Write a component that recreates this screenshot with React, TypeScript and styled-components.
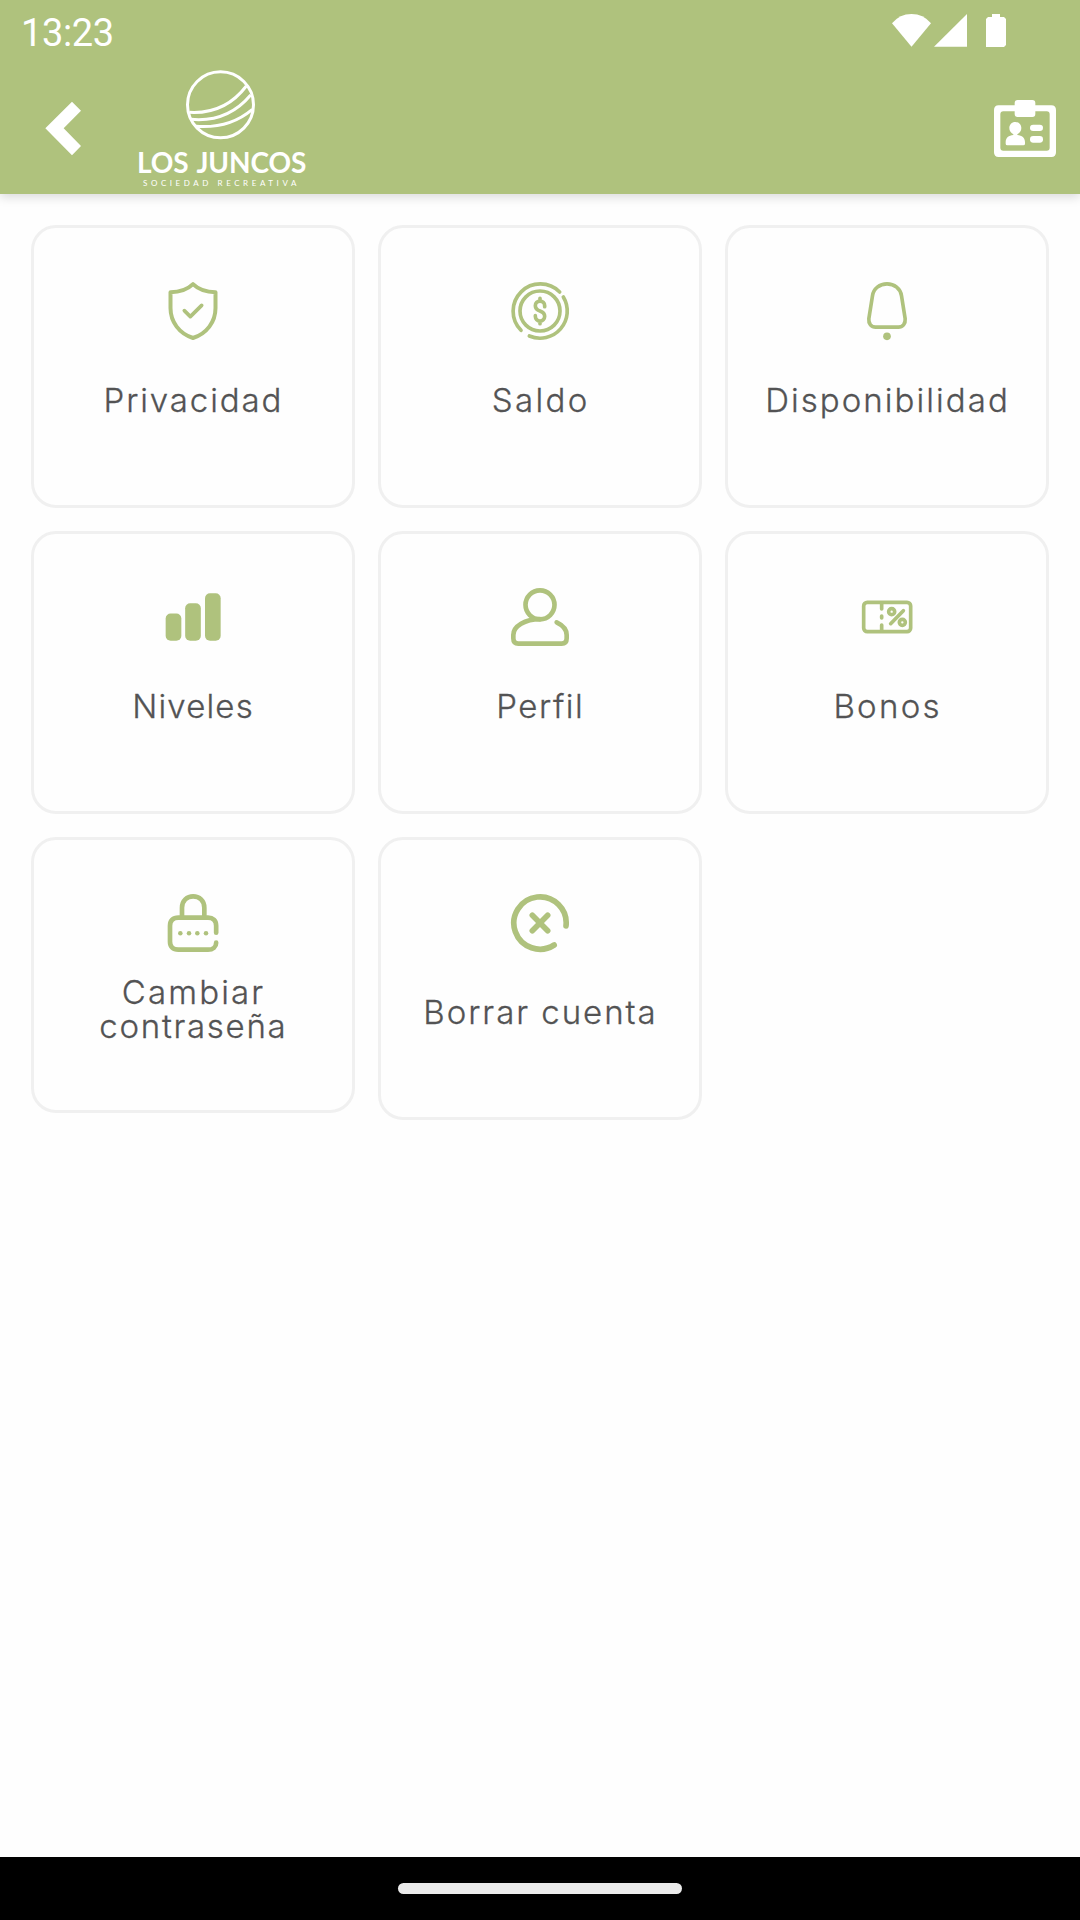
import React from 'react';
import styled, { createGlobalStyle } from 'styled-components';

const GREEN = '#afc27d';

const GlobalStyle = createGlobalStyle`
  *, *::before, *::after { box-sizing: border-box; }
  body { margin: 0; background: #fefefe; }
`;

const Screen = styled.div`
  display: flex;
  flex-direction: column;
  width: 1080px;
  height: 1920px;
  overflow: hidden;
  background: #fefefe;
`;

const Header = styled.header`
  flex: none;
  display: flex;
  flex-direction: column;
  height: 194px;
  background: ${GREEN};
  box-shadow: 0 3px 10px rgba(0, 0, 0, 0.15);
`;

const StatusBar = styled.div`
  display: flex;
  justify-content: space-between;
  align-items: flex-start;
  height: 70px;
  padding: 0 74px 0 21px;
`;

const Clock = styled.span`
  padding-top: 11px;
  font: 400 38px/45px Roboto, sans-serif;
  letter-spacing: -0.4px;
  color: #fff;
`;

const StatusIcons = styled.svg`
  width: 114px;
  height: 33px;
  margin-top: 14px;
  fill: #fff;
`;

const Toolbar = styled.div`
  display: flex;
  align-items: flex-start;
  height: 124px;
  padding: 0 24px 0 45px;
`;

const IconButton = styled.button`
  display: block;
  padding: 0;
  border: 0;
  background: none;
  color: #fff;
  svg { display: block; fill: currentColor; }
`;

const BackButton = styled(IconButton)`
  margin-top: 31px;
`;

const CardButton = styled(IconButton)`
  margin: 30px 0 0 auto;
`;

const Brand = styled.div`
  display: flex;
  flex-direction: column;
  margin-left: 55px;
  color: #fff;
  white-space: nowrap;
`;

const BrandMark = styled.svg`
  width: 169px;
  height: 70px;
  fill: none;
  stroke: currentColor;
  stroke-width: 9;
`;

const BrandName = styled.span`
  margin-top: 10px;
  font: 700 28px/24px Lato, sans-serif;
  letter-spacing: -0.1px;
  word-spacing: 2px;
`;

const BrandTagline = styled.span`
  margin: 4px 0 0 6px;
  font: 400 8px/10px Lato, sans-serif;
  letter-spacing: 3.57px;
`;

const Grid = styled.main`
  flex: 1;
  display: grid;
  grid-template-columns: repeat(3, 324px);
  grid-auto-rows: 283px;
  align-content: start;
  align-items: start;
  gap: 23px;
  padding: 31px 31px 0;
`;

const Tile = styled.button`
  display: flex;
  flex-direction: column;
  align-items: center;
  width: 100%;
  padding: 54px 0 67px;
  border: 3px solid #f0f0f0;
  border-radius: 25px;
  background: #fefefe;
`;

const TileIcon = styled.svg<{ $weight: number }>`
  width: 58px;
  height: 58px;
  overflow: visible;
  fill: none;
  stroke: ${GREEN};
  stroke-width: ${p => p.$weight};
  stroke-linecap: round;
  stroke-linejoin: round;
  .solid { fill: ${GREEN}; stroke: none; }
`;

const TileLabel = styled.span<{ $lines: number }>`
  display: flex;
  flex-direction: column;
  align-items: center;
  height: ${p => (p.$lines > 1 ? 68 : 75)}px;
  margin-top: 23px;
  padding-top: ${p => (p.$lines > 1 ? 0 : 20)}px;
`;

const LabelLine = styled.span<{ $tracking: number }>`
  padding-left: ${p => p.$tracking - 1}px;
  font: 300 33px/34px Inter, sans-serif;
  letter-spacing: ${p => p.$tracking}px;
  white-space: nowrap;
  color: #535354;
  -webkit-text-stroke: 0.3px #535354;
`;

const NavBar = styled.footer`
  flex: none;
  display: flex;
  justify-content: center;
  height: 63px;
  padding-top: 26px;
  background: #000;
`;

const NavHandle = styled.div`
  width: 284px;
  height: 11px;
  border-radius: 6px;
  background: #ebebeb;
`;

type Item = {
  id: string;
  lines: [string, number][];
  weight: number;
  icon: React.ReactNode;
};

const items: Item[] = [
  {
    id: 'privacy',
    lines: [['Privacidad', 1.9]],
    weight: 12,
    icon: (
      <>
        <path d="M87 6.500C70 23 48 30.500 19.500 30.500V78C19.500 120 46 155 87 168C128 155 154.500 120 154.500 78V30.500C126 30.500 104 23 87 6.500Z" />
        <path strokeWidth="11" d="M61 86L79 104L113 70" />
      </>
    ),
  },
  {
    id: 'balance',
    lines: [['Saldo', 2.4]],
    weight: 11,
    icon: (
      <>
        <circle cx="87" cy="87" r="60" />
        <path d="M30 145A81.500 81.500 0 0 1 146 30" />
        <path d="M157 45A81.500 81.500 0 0 1 55 162" />
        <path d="M101 74V71C101 63 95 57.500 87 57.500S73 63 73 71C73 79 79 84 87 87S101 95 101 103S95 117 87 117S73 111 73 103V101M87 49V57M87 117V125" />
      </>
    ),
  },
  {
    id: 'availability',
    lines: [['Disponibilidad', 2.06]],
    weight: 11,
    icon: (
      <>
        <path d="M87 5.500C109 5.500 127.500 20 130.500 41L141.500 110C143 125 134 135.500 121 135.500H53C40 135.500 31 125 32.500 110L43.500 41C46.500 20 65 5.500 87 5.500Z" />
        <circle className="solid" cx="87" cy="163" r="11.500" />
      </>
    ),
  },
  {
    id: 'levels',
    lines: [['Niveles', 1.15]],
    weight: 0,
    icon: (
      <g className="solid">
        <rect x="5" y="76.500" width="47" height="82" rx="15" />
        <rect x="63.500" y="46" width="47" height="112.500" rx="15" />
        <rect x="123" y="15.500" width="47" height="143" rx="15" />
      </g>
    ),
  },
  {
    id: 'profile',
    lines: [['Perfil', 1.55]],
    weight: 14,
    icon: (
      <>
        <circle cx="87" cy="50.500" r="43.500" />
        <path d="M87 93.500C42 93.500 7 115 7 141V151C7 161 12 167 22 167H152C162 167 167 161 167 151V141C167 125 156 112 137 103" />
      </>
    ),
  },
  {
    id: 'vouchers',
    lines: [['Bonos', 2.3]],
    weight: 11,
    icon: (
      <>
        <rect x="17" y="43" width="141" height="88" rx="11" />
        <path d="M71 46V63M71 84V90M71 111V128M98 107L136 68" />
        <circle cx="101" cy="71" r="9" />
        <circle cx="133" cy="103" r="9" />
      </>
    ),
  },
  {
    id: 'password',
    lines: [['Cambiar', 2.15], ['contraseña', 1.7]],
    weight: 14,
    icon: (
      <>
        <path d="M54 70V41C54 20 69 7 87.500 7S121 20 121 41V70" />
        <path d="M156.500 116V95C156.500 79 147 71 132 71H43C27 71 18 80 18 95V143C18 158 27 167 43 167H132C147 167 156.500 158 156.500 146" />
        <g className="solid">
          <circle cx="49" cy="118" r="6.800" />
          <circle cx="75" cy="118" r="6.800" />
          <circle cx="100" cy="118" r="6.800" />
          <circle cx="126" cy="118" r="6.800" />
        </g>
      </>
    ),
  },
  {
    id: 'delete',
    lines: [['Borrar cuenta', 1.95]],
    weight: 17,
    icon: (
      <>
        <path d="M165 96A78.500 78.500 0 1 0 129.500 153" />
        <path d="M64 64L110 110M110 64L64 110" />
      </>
    ),
  },
];

export default function App() {
  return (
    <Screen>
      <GlobalStyle />
      <Header>
        <StatusBar>
          <Clock>13:23</Clock>
          <StatusIcons viewBox="96 42 342 99">
            <path d="M154.500 140L96 70Q119 42 154.500 42T213 70Z" />
            <path d="M222 140.500L321 42V140.500Z" />
            <path d="M396 42H420V51H432L438 57V135L432 141H378V57L384 51H396Z" />
          </StatusIcons>
        </StatusBar>
        <Toolbar>
          <BackButton aria-label="Atrás">
            <svg width="37" height="56" viewBox="135 303 111 168">
              <path d="M136 385L216 305L243 332L191 385L243 438L216 466Z" />
            </svg>
          </BackButton>
          <Brand>
            <BrandMark viewBox="411 210 507 210">
              <circle cx="661.500" cy="314.500" r="99" />
              <path d="M568 337C638 341 696 315 739 258" />
              <path d="M573 358C650 365 706 340 752 285" />
              <path d="M588 379C655 384 710 368 757 328" />
            </BrandMark>
            <BrandName>LOS JUNCOS</BrandName>
            <BrandTagline>SOCIEDAD RECREATIVA</BrandTagline>
          </Brand>
          <CardButton aria-label="Carné">
            <svg width="62" height="57" viewBox="402 300 186 171">
              <path
                fillRule="evenodd"
                d="M416 316H574Q588 316 588 330V457Q588 471 574 471H416Q402 471 402 457V330Q402 316 416 316ZM430 334Q421 334 421 343V443Q421 452 430 452H560Q569 452 569 443V343Q569 334 560 334Z"
              />
              <rect x="464" y="300" width="62" height="51" rx="9" />
              <path d="M466 366C477 366 484 374 484 384C484 392 480 398 472 403V405C486 406 495 414 495 426V431Q495 436 490 436H442Q437 436 437 431V426C437 414 446 406 460 405V403C452 398 448 392 448 384C448 374 455 366 466 366Z" />
              <rect x="510" y="374" width="39" height="19" rx="9.500" />
              <rect x="510" y="408" width="39" height="20" rx="9.500" />
            </svg>
          </CardButton>
        </Toolbar>
      </Header>
      <Grid>
        {items.map(item => (
          <Tile key={item.id}>
            <TileIcon viewBox="0 0 174 174" $weight={item.weight}>
              {item.icon}
            </TileIcon>
            <TileLabel $lines={item.lines.length}>
              {item.lines.map(([text, tracking]) => (
                <LabelLine key={text} $tracking={tracking}>{text}</LabelLine>
              ))}
            </TileLabel>
          </Tile>
        ))}
      </Grid>
      <NavBar>
        <NavHandle />
      </NavBar>
    </Screen>
  );
}
